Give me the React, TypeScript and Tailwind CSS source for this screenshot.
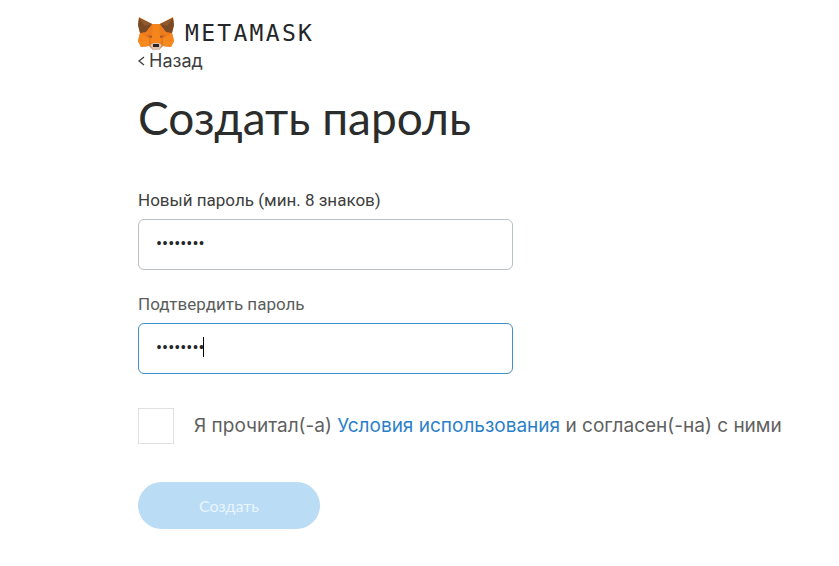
import { useState } from "react";

function FoxLogo() {
  return (
    <svg width="36" height="34" viewBox="0 0 36 34" aria-hidden="true">
      <path fill="#e2761b" d="M1 1 14 8h8L35 1l1 8-2 8 2 8-3 6-8-1-4 4h-6l-4-4-8 1-3-6 2-8-2-8z" />
      <path fill="#f6851b" d="m2 17-2 8 11-1 2-5zM34 17l2 8-11-1-2-5zM14 8h8l3 10-3 12h-8l-3-12z" />
      <path fill="#f58a20" d="m0 25 11-1v6l-8 1zM36 25l-11-1v6l8 1z" />
      <path fill="#ee7c1c" d="m8 15 7-7-1 12-2 3-10-6zM28 15l-7-7 1 12 2 3 10-6z" />
      <path fill="#7a4a26" d="M1 2 0 9l2 8 6-1 6-8zM35 2l1 7-2 8-6-1-6-8z" />
      <path fill="#8f5a30" d="m1 2 13 6-7 2zM35 2 22 8l7 2z" />
      <path fill="#d96d1c" d="m8 19 6 0-1 4zM28 19l-6 0 1 4z" />
      <path fill="#9a5a35" d="m10 20 4 0 0 2zM26 20l-4 0 0 2z" />
      <path fill="#d7c1b3" d="m12 29 3-2h6l3 2-3 5h-6z" />
      <path fill="#2a2320" d="M15 28h6v3h-6z" />
    </svg>
  );
}

type FieldProps = {
  id: string;
  label: string;
  value: string;
  onChange: (value: string) => void;
  active?: boolean;
};

function PasswordField({ id, label, value, onChange, active = false }: FieldProps) {
  return (
    <div className="flex flex-col gap-[7px]">
      <label
        htmlFor={id}
        className={`text-[17px] leading-6 ${active ? "text-[#5b5d5c]" : "text-[#3c3e3d]"}`}
      >
        {label}
      </label>
      <div className="relative">
        <input
          id={id}
          type="password"
          value={value}
          onChange={(event) => onChange(event.target.value)}
          className={`block h-[51px] w-full rounded-md border bg-white px-[17px] pb-0.5 font-['Roboto',sans-serif] text-lg text-[#242628] outline-none ${
            active ? "border-[#3f8fcb]" : "border-[#bbc0c5]"
          }`}
        />
        {active && <span className="absolute top-3.5 left-[65px] h-5 w-px bg-black" />}
      </div>
    </div>
  );
}

export default function App() {
  const [password, setPassword] = useState("password");
  const [confirmation, setConfirmation] = useState("password");

  return (
    <main className="min-h-screen bg-white pt-4 pr-4 pl-[138px] font-['Roboto',sans-serif]">
      <header className="flex items-center gap-[11px]">
        <FoxLogo />
        <span className="font-['DejaVu_Sans_Mono',monospace] text-[23px] leading-8 tracking-widest text-[#242628]">
          METAMASK
        </span>
      </header>
      <a href="#back" className="flex w-fit items-center gap-1 font-['Inter',sans-serif] text-lg leading-[22px] text-[#3c3e3d]">
        <svg width="7" height="10" viewBox="0 0 7 10" fill="none" stroke="currentColor" strokeWidth="1.4" aria-hidden="true">
          <path d="M6 1 1 5l5 4" />
        </svg>
        Назад
      </a>
      <h1 className="mt-[18px] font-['Lato',sans-serif] text-[46px] leading-14 text-[#2b2d2c]">
        Создать пароль
      </h1>
      <form className="mt-[42px]" onSubmit={(event) => event.preventDefault()}>
        <div className="flex max-w-[375px] flex-col gap-[22px]">
          <PasswordField id="new-password" label="Новый пароль (мин. 8 знаков)" value={password} onChange={setPassword} />
          <PasswordField id="confirm-password" label="Подтвердить пароль" value={confirmation} onChange={setConfirmation} active />
        </div>
        <div className="mt-[34px] flex items-center gap-5">
          <input
            id="terms"
            type="checkbox"
            className="size-9 shrink-0 appearance-none border border-[#e0e2e1] bg-white checked:bg-[#1c78c8]"
          />
          <label htmlFor="terms" className="font-['Inter',sans-serif] text-[19px] leading-7 text-[#5f6160]">
            Я прочитал(-а){" "}
            <a href="#terms-of-use" className="text-[#2b7fc9]">
              Условия использования
            </a>{" "}
            и согласен(-на) с ними
          </label>
        </div>
        <button
          type="submit"
          disabled
          className="mt-[38px] block h-[47px] w-[182px] rounded-full bg-[#bbdcf5] font-['Lato',sans-serif] text-base text-[#e9f5fd]"
        >
          Создать
        </button>
      </form>
    </main>
  );
}
